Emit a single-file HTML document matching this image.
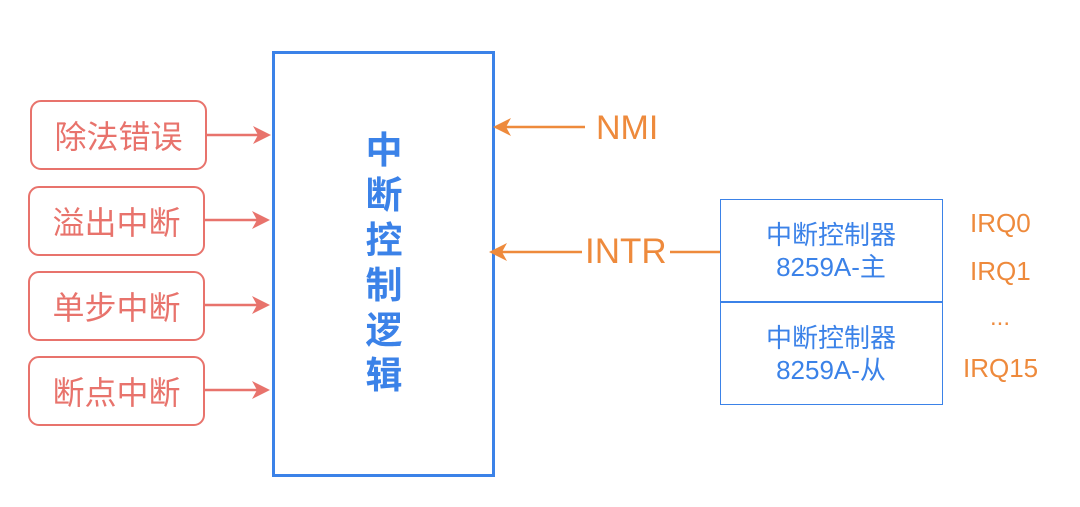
<!DOCTYPE html>
<html><head><meta charset="utf-8"><style>
body{margin:0;width:1080px;height:507px;background:#fff;position:relative;overflow:hidden;font-family:"Liberation Sans","Noto Sans CJK SC",sans-serif}
.r{position:absolute;left:28px;width:173px;height:66px;border:2.5px solid #e8736c;border-radius:11px;color:#e8736c;font-size:32px;display:flex;align-items:center;justify-content:center;letter-spacing:0px}
.t{position:absolute;color:#3b82e8;text-align:center;font-size:26px;line-height:32px;width:222px;left:720px}
.o{position:absolute;color:#ee8a3c;font-size:26px}
</style></head><body>
<div class="r" style="top:100px;left:30px">除法错误</div>
<div class="r" style="top:186px">溢出中断</div>
<div class="r" style="top:271px">单步中断</div>
<div class="r" style="top:356px">断点中断</div>
<div style="position:absolute;left:272px;top:51px;width:217px;height:420px;border:3px solid #3b82e8"></div>
<div style="position:absolute;left:360px;top:128px;width:48px;color:#3b82e8;font-weight:bold;font-size:37px;line-height:45px;text-align:center">中<br>断<br>控<br>制<br>逻<br>辑</div>
<div style="position:absolute;left:720px;top:199px;width:221px;height:204px;border:1.5px solid #3b82e8"></div>
<div style="position:absolute;left:720px;top:301px;width:223px;height:1.5px;background:#3b82e8"></div>
<div class="t" style="top:219px">中断控制器<br>8259A-主</div>
<div class="t" style="top:322px">中断控制器<br>8259A-从</div>
<div class="o" style="left:596px;top:109px;font-size:34px">NMI</div>
<div class="o" style="left:585px;top:232px;font-size:35px">INTR</div>
<div class="o" style="left:970px;top:208px">IRQ0</div>
<div class="o" style="left:970px;top:256px">IRQ1</div>
<div class="o" style="left:990px;top:304px;font-size:24px">...</div>
<div class="o" style="left:963px;top:353px">IRQ15</div>
<svg width="1080" height="507" style="position:absolute;left:0;top:0">
<g stroke="#e8736c" stroke-width="2.5" fill="#e8736c">
<line x1="207" y1="135" x2="262" y2="135"/><path d="M271 135 L253 126 L258 135 L253 144Z" stroke="none"/>
<line x1="204" y1="220" x2="262" y2="220"/><path d="M270 220 L252 211 L257 220 L252 229Z" stroke="none"/>
<line x1="204" y1="305" x2="262" y2="305"/><path d="M270 305 L252 296 L257 305 L252 314Z" stroke="none"/>
<line x1="204" y1="390" x2="262" y2="390"/><path d="M270 390 L252 381 L257 390 L252 399Z" stroke="none"/>
</g>
<g stroke="#ee8a3c" stroke-width="2.5" fill="#ee8a3c">
<line x1="503" y1="127" x2="585" y2="127"/><path d="M493 127 L511 118 L506 127 L511 136Z" stroke="none"/>
<line x1="499" y1="252" x2="582" y2="252"/><path d="M489 252 L507 243 L502 252 L507 261Z" stroke="none"/>
<line x1="670" y1="252" x2="720" y2="252"/>
</g>
</svg>
</body></html>
